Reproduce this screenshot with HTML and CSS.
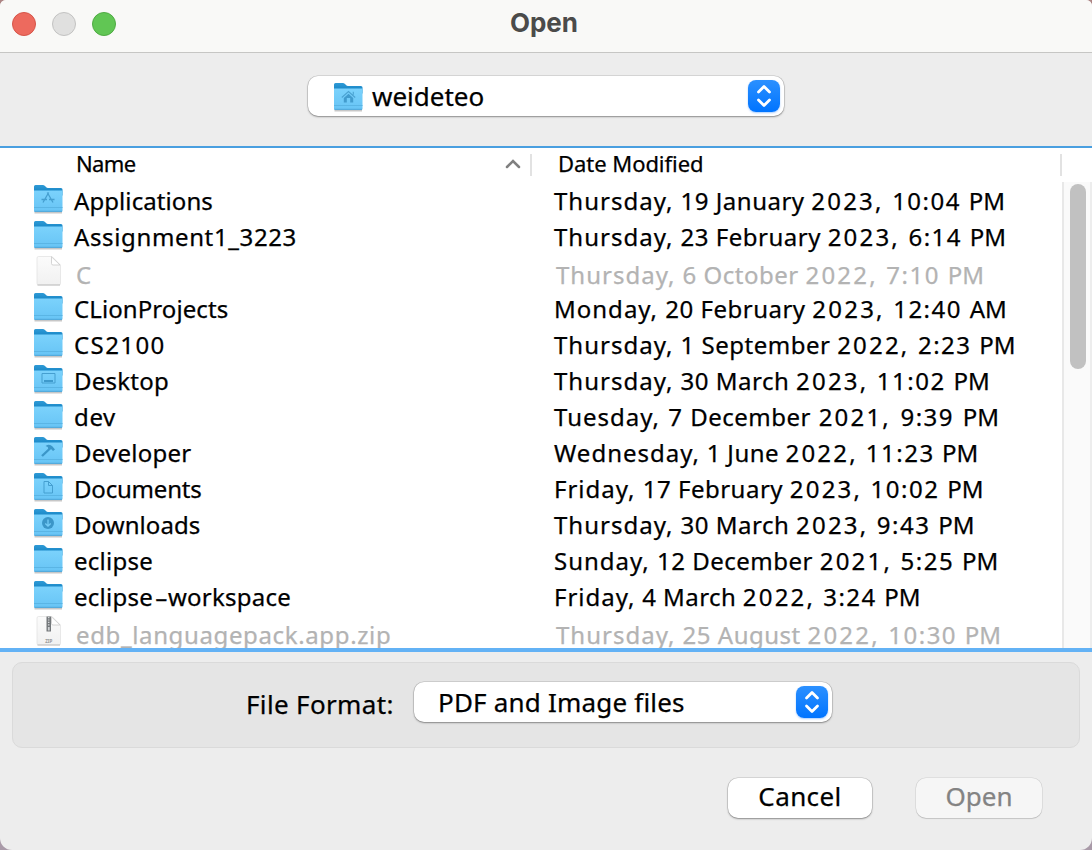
FILE: index.html
```
<!DOCTYPE html>
<html lang="en">
<head>
<meta charset="utf-8">
<title>Open</title>
<link rel="stylesheet" href="styles.css">
</head>
<body>
<svg class="defs" width="0" height="0" aria-hidden="true">
  <defs>
    <linearGradient id="front" x1="0" y1="0" x2="0" y2="1"><stop offset="0" stop-color="#7bd2fc"/><stop offset="1" stop-color="#67c4f5"/></linearGradient>
    <linearGradient id="back" x1="0" y1="0" x2="0" y2="1"><stop offset="0" stop-color="#2f9ad6"/><stop offset=".3" stop-color="#1584c4"/></linearGradient>
    <linearGradient id="paper" x1="0" y1="0" x2="0" y2="1"><stop offset="0" stop-color="#fbfbfb"/><stop offset="1" stop-color="#f1f1f1"/></linearGradient>
    <symbol id="folder" viewBox="0 0 32 30">
      <path d="M1.500 27.500h27.500v2H1.500z" fill="#000" opacity=".22"/>
      <path d="M1 26V2.500Q1 1 2.500 1h7.300Q11 1 12 2l1 1q.8.900 2 .9h13Q29.500 3.900 29.500 5.400v6H1z" fill="url(#back)"/>
      <path d="M1 6.500h28.500V26.500Q29.500 28 28 28H2.500Q1 28 1 26.500z" fill="url(#front)"/>
      <path d="M1 23.500h28.500" stroke="#5ab5e5" stroke-width="1"/>
      <path d="M1.500 27.300h27.500" stroke="#4fa6d8" stroke-width="1"/>
    </symbol>
    <symbol id="page" viewBox="0 0 32 30">
      <path d="M5.500 .5h13.500L27.500 9v18.500q0 1.500-1.500 1.500H5.500Q4 29 4 27.500V2Q4 .5 5.500 .5z" fill="url(#paper)" stroke="#e0e0e0" stroke-width=".7"/>
      <path d="M4.500 29h22.500" stroke="#bdbdbd" stroke-width="1"/>
      <path d="M18.500 .8L27 9h-7q-1.500 0-1.500-1.500z" fill="#fff" stroke="#c9c9c9" stroke-width=".8"/>
    </symbol>
    <symbol id="arrows" viewBox="0 0 32 32">
      <path d="M10.500 12L16 6.500l5.500 5.500M10.500 20L16 25.500l5.500-5.500" fill="none" stroke="#fff" stroke-width="2.800" stroke-linecap="round" stroke-linejoin="round"/>
    </symbol>
  </defs>
</svg>
<main class="window">
  <header class="titlebar">
    <div class="lights"><i class="light close"></i><i class="light minimise"></i><i class="light zoom"></i></div>
    <h1 class="title">Open</h1>
  </header>
  <section class="location">
    <div class="popup path">
      <svg class="icon" viewBox="0 0 32 30"><use href="#folder"/><path d="M8.800 15.500l6.700-6 6.700 6M20.300 9.800v3" fill="none" stroke="#4ba3d2" stroke-width="1.100"/><path d="M10.800 16l4.700-4.200 4.700 4.200V20.500h-9.400zM13.800 16v4.500h3.400V16z" fill="#429cce" fill-rule="evenodd"/></svg>
      <span class="label">weideteo</span>
      <svg class="stepper"><use href="#arrows"/></svg>
    </div>
  </section>
  <section class="browser">
    <div class="columns">
      <div class="col name"><span>Name</span><svg class="sort" viewBox="0 0 16 10"><path d="M2 8l6-6 6 6" fill="none" stroke="#808080" stroke-width="2.500" stroke-linecap="round"/></svg></div>
      <div class="col date"><span>Date Modified</span></div>
    </div>
    <div class="list">
      <div class="rows">
        <div class="row"><svg class="icon" viewBox="0 0 32 30"><use href="#folder"/><path d="M14.300 8.500l5.700 10M15.700 8.500L10 18.500M8.500 15.500H14M16 15.500h5.500" fill="none" stroke="#459fd0" stroke-width="1.300"/></svg><span class="file snug">Applications</span><span class="when">Thursday, <span class="month">19 January </span><span class="year">2023, </span><span class="time">10:04 </span><span class="half">PM</span></span></div>
        <div class="row"><svg class="icon"><use href="#folder"/></svg><span class="file wide">Assignment1_3223</span><span class="when">Thursday, <span class="month">23 February </span><span class="year">2023, </span><span class="time">6:14 </span><span class="half">PM</span></span></div>
        <div class="row disabled"><svg class="icon"><use href="#page"/></svg><span class="file">C</span><span class="when">Thursday, <span class="month">6 October </span><span class="year">2022, </span><span class="time">7:10 </span><span class="half">PM</span></span></div>
        <div class="row"><svg class="icon"><use href="#folder"/></svg><span class="file snug">CLionProjects</span><span class="when">Monday, <span class="month">20 February </span><span class="year">2023, </span><span class="time">12:40 </span><span class="half">AM</span></span></div>
        <div class="row"><svg class="icon"><use href="#folder"/></svg><span class="file digits">CS2100</span><span class="when">Thursday, <span class="month">1 September </span><span class="year">2022, </span><span class="time">2:23 </span><span class="half">PM</span></span></div>
        <div class="row"><svg class="icon" viewBox="0 0 32 30"><use href="#folder"/><path d="M9 9.500h13v9.500H9z" fill="none" stroke="#459fd0" stroke-width="1"/><path d="M11 17h9" stroke="#3692c4" stroke-width="1.700"/></svg><span class="file">Desktop</span><span class="when">Thursday, <span class="month">30 March </span><span class="year">2023, </span><span class="time">11:02 </span><span class="half">PM</span></span></div>
        <div class="row"><svg class="icon"><use href="#folder"/></svg><span class="file wide">dev</span><span class="when spread">Tuesday, <span class="month">7 December </span><span class="year">2021, </span><span class="time">9:39 </span><span class="half">PM</span></span></div>
        <div class="row"><svg class="icon" viewBox="0 0 32 30"><use href="#folder"/><path d="M9 20l8.500-8" stroke="#3b96c8" stroke-width="2.400"/><path d="M12.500 10q4-2.500 7 .5l2.500 3-2 1.500-2-2-2.500.5-.8-2.500z" fill="#3b96c8"/></svg><span class="file">Developer</span><span class="when close-set">Wednesday, <span class="month">1 June </span><span class="year">2022, </span><span class="time">11:23 </span><span class="half">PM</span></span></div>
        <div class="row"><svg class="icon" viewBox="0 0 32 30"><use href="#folder"/><path d="M11 9.500h4.500l4 4v7.500H11zM15.500 9.500v4h4" fill="none" stroke="#459fd0" stroke-width="1"/></svg><span class="file tight">Documents</span><span class="when">Friday, <span class="month">17 February </span><span class="year">2023, </span><span class="time">10:02 </span><span class="half">PM</span></span></div>
        <div class="row"><svg class="icon" viewBox="0 0 32 30"><use href="#folder"/><circle cx="15" cy="15" r="6" fill="#3b96c8"/><path d="M15 11.500v6.500M12.300 15.500l2.700 2.700 2.700-2.700" fill="none" stroke="#75ccf7" stroke-width="1.300"/></svg><span class="file snug">Downloads</span><span class="when">Thursday, <span class="month">30 March </span><span class="year">2023, </span><span class="time">9:43 </span><span class="half">PM</span></span></div>
        <div class="row"><svg class="icon"><use href="#folder"/></svg><span class="file">eclipse</span><span class="when">Sunday, <span class="month">12 December </span><span class="year">2021, </span><span class="time">5:25 </span><span class="half">PM</span></span></div>
        <div class="row"><svg class="icon"><use href="#folder"/></svg><span class="file">eclipse<span class="dash">-</span>workspace</span><span class="when close-set">Friday, <span class="month">4 March </span><span class="year">2022, </span><span class="time">3:24 </span><span class="half">PM</span></span></div>
        <div class="row disabled"><svg class="icon" viewBox="0 0 32 30"><use href="#page"/><path d="M13.500 .5h4.500v15h-4.500z" fill="#74787b"/><path d="M15.700 1v9" stroke="#d5d8da" stroke-width="1.500" stroke-dasharray="1.200 1.200"/><path d="M14.900 11h1.800v3.500h-1.800z" fill="#cfd2d4"/><text class="ziptext" x="12.200" y="27">ZIP</text></svg><span class="file wide">edb_languagepack.app.zip</span><span class="when">Thursday, <span class="month">25 August </span><span class="year">2022, </span><span class="time">10:30 </span><span class="half">PM</span></span></div>
      </div>
      <div class="track"><div class="thumb"></div></div>
    </div>
  </section>
  <footer class="footer">
    <div class="format">
      <span class="caption">File Format:</span>
      <div class="popup type"><span class="label">PDF and Image files</span><svg class="stepper"><use href="#arrows"/></svg></div>
    </div>
    <div class="actions"><button class="button cancel">Cancel</button><button class="button open" disabled>Open</button></div>
  </footer>
</main>
</body>
</html>
```
FILE: styles.css
```
* { box-sizing: border-box; }
body { margin: 0; background: linear-gradient(#ad8584, #a99aa8); font-family: "Noto Sans", sans-serif; color: #000; overflow: hidden; -webkit-text-stroke: .25px; }
.defs { display: block; height: 0; }
.window { width: 1092px; height: 850px; background: #ededed; border-radius: 6px 6px 12px 12px; overflow: hidden; display: flex; flex-direction: column; }
.titlebar { height: 53px; background: #f9f9f7; border-bottom: 1px solid #c6c6c4; display: grid; grid-template-columns: 1fr auto 1fr; flex: none; }
.lights { display: flex; gap: 16px; padding: 12px 0 0 12px; }
.light { width: 24px; height: 24px; border-radius: 50%; border: 1px solid; }
.close { background: #ed6a5e; border-color: #d65549; }
.minimise { background: #e0e0df; border-color: #c3c3c2; }
.zoom { background: #61c654; border-color: #4fab43; }
.title { margin: 0; padding-right: 4px; font: 700 26px/46px Inter, sans-serif; color: #4b4b4a; -webkit-text-stroke: 0; }
.location { height: 93px; padding-top: 23px; display: flex; justify-content: center; flex: none; }
.popup { height: 40px; background: #fff; border-radius: 10px; box-shadow: 0 0 0 .5px rgba(0,0,0,.18), 0 1px 2px rgba(0,0,0,.35); display: flex; align-items: center; font-size: 26px; white-space: nowrap; }
.path { width: 476px; padding: 0 4px 0 25px; }
.path .label { margin-left: 7px; }
.popup .label { flex: 1; line-height: 40px; }
.type .label { letter-spacing: .2px; }
.stepper { width: 32px; height: 32px; border-radius: 8px; background: linear-gradient(#2b90ff, #0074ff); box-shadow: 0 1px 2px rgba(0,110,255,.35); flex: none; }
.icon { width: 32px; height: 30px; flex: none; overflow: visible; }
.path .icon { margin-top: 2px; }
.browser { height: 506px; background: #fff; border-top: 2px solid #4a9fe0; border-bottom: 4px solid #63b2f5; display: flex; flex-direction: column; flex: none; }
.columns { height: 34px; display: flex; font-size: 22px; line-height: 30px; letter-spacing: -.05px; }
.col { display: flex; background: linear-gradient(#e2e2e2, #e2e2e2) right 6px / 2px 22px no-repeat; }
.name { width: 532px; padding: 0 11px 0 76px; justify-content: space-between; letter-spacing: -.6px; }
.date { width: 530px; padding-left: 26px; }
.sort { width: 16px; height: 10px; margin-top: 11px; }
.list { flex: 1; min-height: 0; display: flex; overflow: hidden; }
.rows { flex: 1; }
.row { height: 36px; padding: 2px 0 0 33px; display: grid; grid-template-columns: 41px 480px 1fr; font-size: 24px; line-height: 34px; white-space: nowrap; }
.row .icon { margin-left: -.5px; }
.file { letter-spacing: .25px; }
.file.snug { letter-spacing: .08px; }
.file.tight { letter-spacing: -.2px; }
.file.wide { letter-spacing: .63px; }
.file.digits { letter-spacing: 1.4px; }
.dash { display: inline-block; width: 15px; text-indent: 1px; transform: scaleX(1.7); transform-origin: 0 50%; text-align: left; letter-spacing: 0; }
.when { letter-spacing: 1px; white-space: pre; }
.when.spread { word-spacing: 1px; }
.when.close-set { word-spacing: -.4px; }
.month { letter-spacing: .5px; }
.year { letter-spacing: 2.2px; }
.time { letter-spacing: 1.5px; }
.half { letter-spacing: 0; }
.disabled { color: #b3b3b3; }
.disabled .file, .disabled .when { padding: 2px 0 0 2px; }
.ziptext { font: 700 4.500px "Noto Sans", sans-serif; fill: #999; }
.track { width: 30px; background: #fafafa; border-left: 2px solid #e8e8e8; border-right: 2px solid #ededed; padding: 2px 0 0 6px; }
.thumb { width: 16px; height: 185px; border-radius: 8px; background: #c1c1c1; }
.footer { flex: 1; padding: 10px 12px 0; }
.format { height: 86px; background: #e5e5e5; border: 1px solid #dadada; border-radius: 10px; padding: 19px 0 0 233px; display: flex; gap: 20px; }
.caption { font-size: 26px; line-height: 44px; width: 148px; white-space: nowrap; letter-spacing: .35px; }
.type { width: 418px; padding: 0 4px 0 24px; }
.actions { display: flex; justify-content: flex-end; gap: 44px; padding: 30px 38px 0 0; }
.button { height: 40px; border: 0; border-radius: 10px; padding: 0 0 4px; background: #fff; box-shadow: 0 0 0 .5px rgba(0,0,0,.18), 0 1px 2px rgba(0,0,0,.35); font: 26px/36px "Noto Sans", sans-serif; color: #000; }
.cancel { width: 144px; letter-spacing: .4px; }
.open { width: 126px; background: #f6f6f6; color: #838383; box-shadow: 0 0 0 .5px rgba(0,0,0,.12), 0 1px 1px rgba(0,0,0,.12); }
```
